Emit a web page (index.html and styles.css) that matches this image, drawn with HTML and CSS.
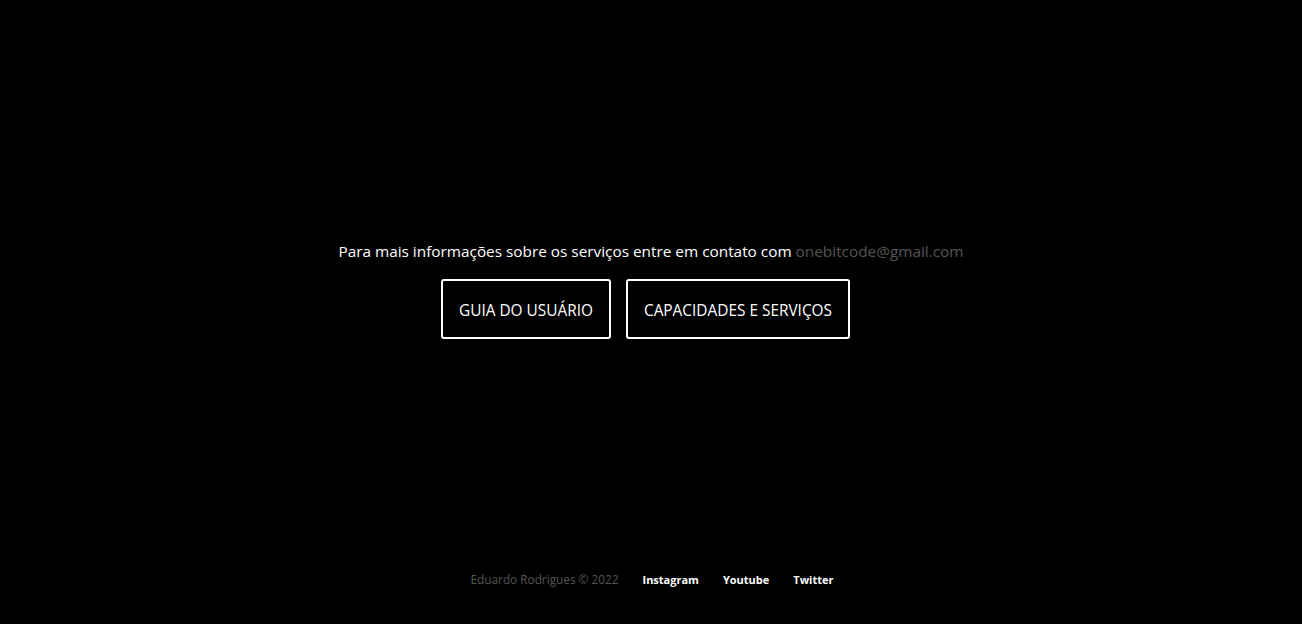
FILE: index.html
```html
<!DOCTYPE html>
<html lang="pt-BR">
<head>
<meta charset="utf-8">
<title>OneBitCode</title>
<link rel="stylesheet" href="styles.css">
</head>
<body>
<div class="page">
  <main class="main">
    <p class="contact">Para mais informações sobre os serviços entre em contato com <span class="email">onebitcode@gmail.com</span></p>
    <div class="buttons">
      <a class="btn" href="#">GUIA DO USUÁRIO</a>
      <a class="btn" href="#">CAPACIDADES E SERVIÇOS</a>
    </div>
  </main>
  <footer class="footer">
    <span class="copy">Eduardo Rodrigues © 2022</span>
    <a class="social" href="#">Instagram</a>
    <a class="social" href="#">Youtube</a>
    <a class="social" href="#">Twitter</a>
  </footer>
</div>
</body>
</html>
```

FILE: styles.css
```css
html, body {
  margin: 0;
  padding: 0;
  background: #000;
  color: #fff;
  font-family: "Open Sans", "Noto Sans", sans-serif;
}
.page {
  height: 100vh;
  display: flex;
  flex-direction: column;
}
.main {
  flex: 1;
  display: flex;
  flex-direction: column;
  align-items: center;
  justify-content: center;
  padding-top: 9px;
}
.contact {
  margin: 0;
  font-size: 15.35px;
  line-height: 20px;
}
.email {
  color: #555;
}
.buttons {
  display: flex;
  gap: 15px;
  margin-top: 18px;
  padding-right: 11px;
}
.btn {
  display: block;
  color: #fff;
  text-decoration: none;
  border: 2px solid #fff;
  border-radius: 3px;
  padding: 19px 16px 16px;
  font-size: 15.4px;
  line-height: 21px;
}
.footer {
  display: flex;
  justify-content: center;
  align-items: center;
  gap: 24px;
  height: 16px;
  padding-bottom: 37px;
  padding-left: 2px;
  font-size: 11px;
}
.copy {
  color: #555;
  font-size: 11.8px;
}
.social {
  color: #fff;
  font-weight: 700;
  text-decoration: none;
}
```
